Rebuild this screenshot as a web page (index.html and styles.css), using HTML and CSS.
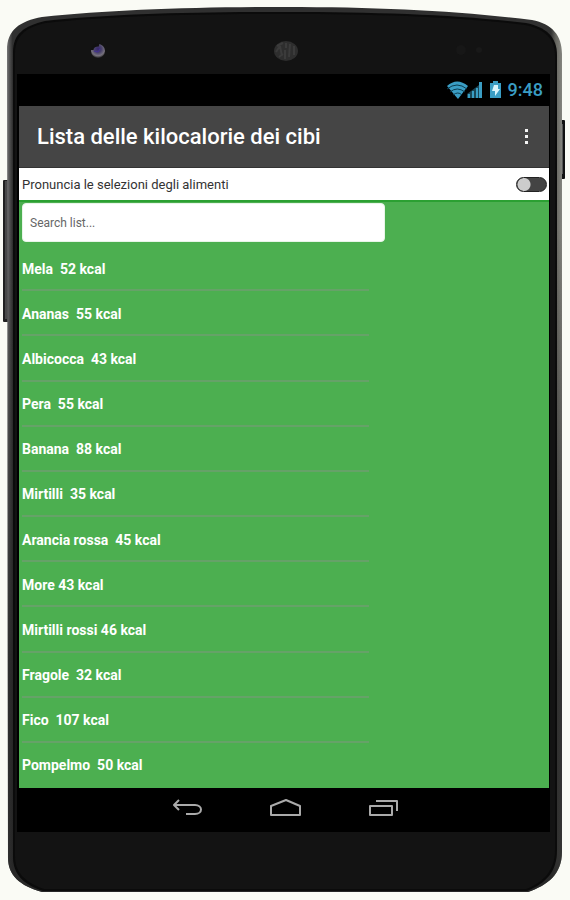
FILE: index.html
```html
<!DOCTYPE html>
<html lang="it">
<head>
<meta charset="utf-8">
<meta name="viewport" content="width=device-width, initial-scale=1">
<title>Lista delle kilocalorie dei cibi</title>
<link rel="stylesheet" href="styles.css">
</head>
<body>
<div class="device">
  <svg class="shell" viewBox="0 0 570 900" preserveAspectRatio="none" aria-hidden="true">
    <defs>
      <linearGradient id="rim" x1="0" x2="1" y1="0" y2="0">
        <stop offset="0" stop-color="#777"/>
        <stop offset="0.004" stop-color="#555"/>
        <stop offset="0.01" stop-color="#303030"/>
        <stop offset="0.98" stop-color="#303030"/>
        <stop offset="0.989" stop-color="#666660"/>
        <stop offset="1" stop-color="#85857f"/>
      </linearGradient>
      <linearGradient id="rimFade" x1="0" x2="0" y1="0" y2="1">
        <stop offset="0.25" stop-color="#262626" stop-opacity="0"/>
        <stop offset="0.75" stop-color="#262626" stop-opacity="0.85"/>
      </linearGradient>
      <radialGradient id="lens" cx="0.5" cy="0.35" r="0.65">
        <stop offset="0" stop-color="#35246f"/>
        <stop offset="0.4" stop-color="#48416a"/>
        <stop offset="0.75" stop-color="#77727d"/>
        <stop offset="1" stop-color="#222"/>
      </radialGradient>
    </defs>
    <rect x="3" y="180" width="6" height="142" rx="1" fill="#202020"/>
    <rect x="5" y="181" width="2" height="138" fill="#484848"/>
    <rect x="560" y="120" width="5" height="59" rx="1" fill="#111"/>
    <rect x="562" y="124" width="1" height="50" fill="#555"/>
    <path d="M7 50C7 30 20 21 42 17C110 10 190 7 285 7S460 11 532 20C552 24 562 35 562 54V852C562 874 548 885 528 892H42C20 886 8 875 8 858Z" fill="url(#rim)"/>
    <path d="M7 50C7 30 20 21 42 17C110 10 190 7 285 7S460 11 532 20C552 24 562 35 562 54V852C562 874 548 885 528 892H42C20 886 8 875 8 858Z" fill="url(#rimFade)"/>
    <path d="M13 52C13 34 24 26 45 21C110 14 190 12 285 12S460 15 526 23C546 27 557 37 557 55V850C557 872 546 883 527 891H43C22 884 13 873 13 857Z" fill="#0b0b0b"/>
    <path d="M15 53C15 36 26 27 46 23C110 16 190 14 285 14S460 17 525 25C544 29 555 38 555 56V850C555 870 544 882 526 889H44C24 882 15 872 15 856Z" fill="#131313"/>
    <circle cx="98" cy="51" r="7" fill="url(#lens)"/>
    <path d="M92 50a6 5 0 0 1 7-5" fill="none" stroke="#111" stroke-width="3"/>
    <path d="M94 51l4 1 2-3" fill="none" stroke="#423092" stroke-width="1"/>
    <ellipse cx="286" cy="51" rx="12" ry="10" fill="#2e2e2e"/>
    <path d="M277 46l6-3M276 52l4-6 2 10M286 43v5M285 50v9M290 44l-1 13M294 46v9M279 57l4-3" fill="none" stroke="#3b3b3b" stroke-width="2"/>
    <circle cx="461" cy="50" r="5" fill="#171717"/>
    <circle cx="479" cy="50" r="3" fill="#191919"/>
  </svg>

  <main class="screen">
    <div class="status">
      <svg class="status-icons" viewBox="0 0 56 20" role="img" aria-label="Wi-Fi, segnale, batteria in carica">
        <path d="M1 6Q11-3 22 6L12 19Z" fill="#3a9dc4"/>
        <path d="M1 9Q11 1 21 9M4 12Q11 6 19 12M7 15Q12 11 16 15" fill="none" stroke="#0b3c50" stroke-width="1"/>
        <path d="M22 18v-4h2v4zM26 18v-7h2v7zM30 18V8h2v10zM33 18V2h3v16z" fill="#3a9dc4"/>
        <path d="M21 14L33 5v13H21z" fill="#3a9dc4" opacity="0.45"/>
        <path d="M44 3h3V1h5v2h3v15H44z" fill="#3a9dc4"/>
        <path d="M48 5h4v4h2l-5 7v-5h-3z" fill="#d9f5fc"/>
      </svg>
      <time class="clock">9:48</time>
    </div>

    <header class="title-bar">
      <h1>Lista delle kilocalorie dei cibi</h1>
      <button class="more" type="button" aria-label="Altre opzioni">
        <svg viewBox="0 0 4 18" aria-hidden="true"><path d="M0 1h3v3H0zM0 7h3v3H0zM0 13h3v3H0z" fill="#f4f4f4"/></svg>
      </button>
    </header>

    <div class="speech">
      <label for="speak">Pronuncia le selezioni degli alimenti</label>
      <input class="switch" id="speak" type="checkbox">
    </div>

    <section class="foods">
      <input class="search" type="search" placeholder="Search list..." aria-label="Search list">
      <ul class="list">
        <li>Mela  52 kcal</li>
        <li>Ananas  55 kcal</li>
        <li>Albicocca  43 kcal</li>
        <li>Pera  55 kcal</li>
        <li>Banana  88 kcal</li>
        <li>Mirtilli  35 kcal</li>
        <li>Arancia rossa  45 kcal</li>
        <li>More 43 kcal</li>
        <li>Mirtilli rossi 46 kcal</li>
        <li>Fragole  32 kcal</li>
        <li>Fico  107 kcal</li>
        <li>Pompelmo  50 kcal</li>
      </ul>
    </section>

    <nav class="system-nav" aria-label="Sistema">
      <button type="button" aria-label="Indietro">
        <svg viewBox="0 0 34 20"><path d="M8 2L3 7l5 5M3 7h21c8 0 8 9 0 9h-9" /></svg>
      </button>
      <button type="button" aria-label="Home">
        <svg viewBox="0 0 34 20"><path d="M2 17V8L17 2l14 6v9z"/></svg>
      </button>
      <button type="button" aria-label="App recenti">
        <svg viewBox="0 0 34 20"><path d="M3 8h22v9H3zM9 3h21v10"/></svg>
      </button>
    </nav>
  </main>
</div>
</body>
</html>
```
FILE: styles.css
```css
* {
  box-sizing: border-box;
}

body {
  margin: 0;
  background: #fafbf5;
  font-family: Roboto, "Liberation Sans", sans-serif;
}

button {
  padding: 0;
  border: 0;
  background: none;
}

.device {
  position: relative;
  display: flex;
  min-height: 100vh;
  padding: 74px 20px 68px 17px;
}

.shell {
  position: absolute;
  inset: 0;
  width: 100%;
  height: 100%;
}

.screen {
  position: relative;
  display: flex;
  flex: 1;
  flex-direction: column;
  padding: 0 1px 0 2px;
  background: #000;
}

.status {
  display: flex;
  align-items: center;
  justify-content: flex-end;
  gap: 6px;
  height: 32px;
  padding-right: 6px;
}

.status-icons {
  width: 56px;
  height: 20px;
}

.clock {
  color: #3a9dc4;
  font-size: 18px;
  font-weight: 500;
  line-height: 32px;
}

.title-bar {
  display: flex;
  align-items: center;
  justify-content: space-between;
  height: 62px;
  padding: 0 16px 0 18px;
  border-bottom: 1px solid #333;
  background: #454545;
}

h1 {
  margin: 0;
  color: #fff;
  font-size: 22px;
  font-weight: 500;
  line-height: 28px;
}

.more {
  width: 12px;
  height: 32px;
}

.more svg {
  display: block;
  width: 4px;
  height: 18px;
  margin: auto;
}

.speech {
  display: flex;
  align-items: center;
  justify-content: space-between;
  height: 34px;
  padding: 0 2px 0 3px;
  border-bottom: 2px solid #2ba032;
  background: #fff;
  color: #333;
  font-size: 13px;
}

.switch {
  width: 31px;
  height: 15px;
  margin: 0;
  border: 1px solid #222;
  border-radius: 8px;
  appearance: none;
  background: radial-gradient(circle at 7px 50%, #ccc 6px, #444 7px);
}

.foods {
  display: flex;
  flex: 1;
  flex-direction: column;
  gap: 4px;
  padding: 1px 1px 0 3px;
  background: #4caf50;
}

.search {
  width: 69%;
  height: 39px;
  margin: 0;
  padding: 0 7px;
  border: 1px solid #e8f5e8;
  border-radius: 4px;
  background: #fff;
  font-family: inherit;
  font-size: 12px;
}

.search::placeholder {
  color: #666;
}

.list {
  display: grid;
  flex: 1;
  grid-auto-rows: 1fr;
  width: 66%;
  margin: 0;
  padding: 0;
  list-style: none;
}

.list li {
  display: flex;
  align-items: center;
  min-height: 24px;
  padding-top: 2px;
  border-bottom: 2px solid #66a268;
  color: #fff;
  font-size: 14px;
  font-weight: 700;
  white-space: pre;
}

.list li:last-child {
  border-bottom-color: transparent;
}

.system-nav {
  display: flex;
  align-items: center;
  justify-content: center;
  gap: 64px;
  height: 44px;
  padding: 0 0 4px 3px;
}

.system-nav svg {
  display: block;
  width: 34px;
  height: 20px;
  fill: none;
  stroke: #aaa;
  stroke-width: 2;
  stroke-linejoin: round;
}
```
